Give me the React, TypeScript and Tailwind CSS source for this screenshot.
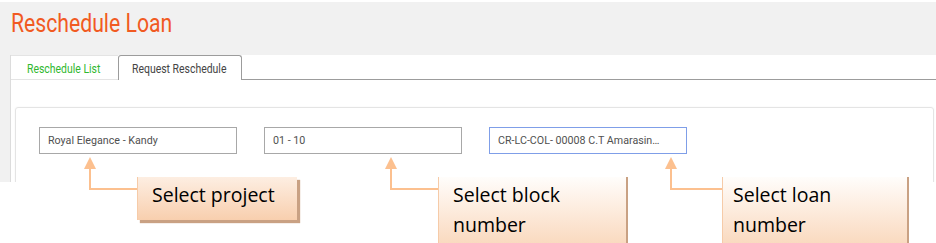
import React from 'react'

const ui = "font-['Roboto',sans-serif]"
const note = "font-['Open_Sans','Lato',sans-serif]"

function Field({ value, focused }: { value: string; focused?: boolean }) {
  return (
    <div
      className={`flex h-[27px] w-[198px] items-center overflow-hidden border bg-white pl-[8px] text-[11.5px] text-[#505050] ${ui} ${
        focused ? 'border-[#7f9ee8]' : 'border-[#a8a8a8]'
      }`}
    >
      <span className="inline-block origin-left scale-x-[0.93] whitespace-nowrap">{value}</span>
    </div>
  )
}

function Arrow({ x, to }: { x: number; to: number }) {
  return (
    <g>
      <polygon points={`${x},157 ${x - 6},169 ${x + 6},169`} fill="#fcc08f" />
      <polyline points={`${x},168 ${x},189 ${to},189`} fill="none" stroke="#fcc08f" strokeWidth="2" />
    </g>
  )
}

export default function App() {
  return (
    <div className="relative h-[243px] w-[936px] overflow-hidden bg-white">
      {/* captured page */}
      <div className="h-[182px] overflow-hidden border-t-2 border-white bg-[#f1f1f1]">
        <div className="h-[53px] pl-[11px] pt-[7px]">
          <h1 className={`inline-block origin-left scale-x-[0.815] whitespace-nowrap text-[26px] leading-[28px] text-[#f15a22] ${ui}`}>
            Reschedule Loan
          </h1>
        </div>

        <div className="ml-[10px] h-[130px] border-l border-[#dcdcdc] bg-white">
          <div className={`flex h-[25px] text-[12px] ${ui}`}>
            <div className="flex w-[107px] items-center border-t border-b border-[#e4e4e4] pl-[16px] pt-[2px] text-[#2fb82f]">
              <span className="inline-block origin-left scale-x-[0.87] whitespace-nowrap">Reschedule List</span>
            </div>
            <div className="flex w-[124px] items-center rounded-t-[3px] border border-b-0 border-[#9c9c9c] pl-[13px] pt-[2px] text-[#444]">
              <span className="inline-block origin-left scale-x-[0.87] whitespace-nowrap">Request Reschedule</span>
            </div>
            <div className="flex-1 border-b border-[#9c9c9c]" />
          </div>

          <div className="mt-[27px] ml-[4px] mr-[2px] h-[90px] rounded-[3px] border border-[#e4e4e4] pt-[19px] pl-[23px] shadow-[0_0_2px_rgba(0,0,0,0.06)]">
            <div className="flex gap-[27px]">
              <Field value="Royal Elegance - Kandy" />
              <Field value="01 - 10" />
              <Field value="CR-LC-COL- 00008 C.T Amarasin…" focused />
            </div>
          </div>
        </div>
      </div>

      {/* annotations */}
      <svg className="pointer-events-none absolute inset-0" width="936" height="243">
        <Arrow x={90} to={137} />
        <Arrow x={391} to={438} />
        <Arrow x={671} to={722} />
      </svg>

      <div
        className={`absolute left-[137px] top-[177px] h-[43px] w-[160px] border-l border-[#f6cba8] bg-gradient-to-b from-[#fdeee2] to-[#f8cfae] pl-[14px] pt-[3px] text-[19.5px] leading-[30px] text-black shadow-[3px_3px_1px_#c9a183] ${note}`}
      >
        Select project
      </div>
      <div
        className={`absolute left-[438px] top-[177px] h-[90px] w-[190px] border-l border-r-2 border-l-[#f6cba8] border-r-[#c9a183] bg-gradient-to-b from-[#fffdfb] to-[#f7cdaa] pl-[14px] pt-[3px] text-[19.5px] leading-[30px] text-black ${note}`}
      >
        Select block
        <br />
        number
      </div>
      <div
        className={`absolute left-[722px] top-[177px] h-[90px] w-[187px] border-l border-r-2 border-l-[#f6cba8] border-r-[#c9a183] bg-gradient-to-b from-[#fffdfb] to-[#f7cdaa] pl-[10px] pt-[3px] text-[19.5px] leading-[30px] text-black ${note}`}
      >
        Select loan
        <br />
        number
      </div>
    </div>
  )
}
